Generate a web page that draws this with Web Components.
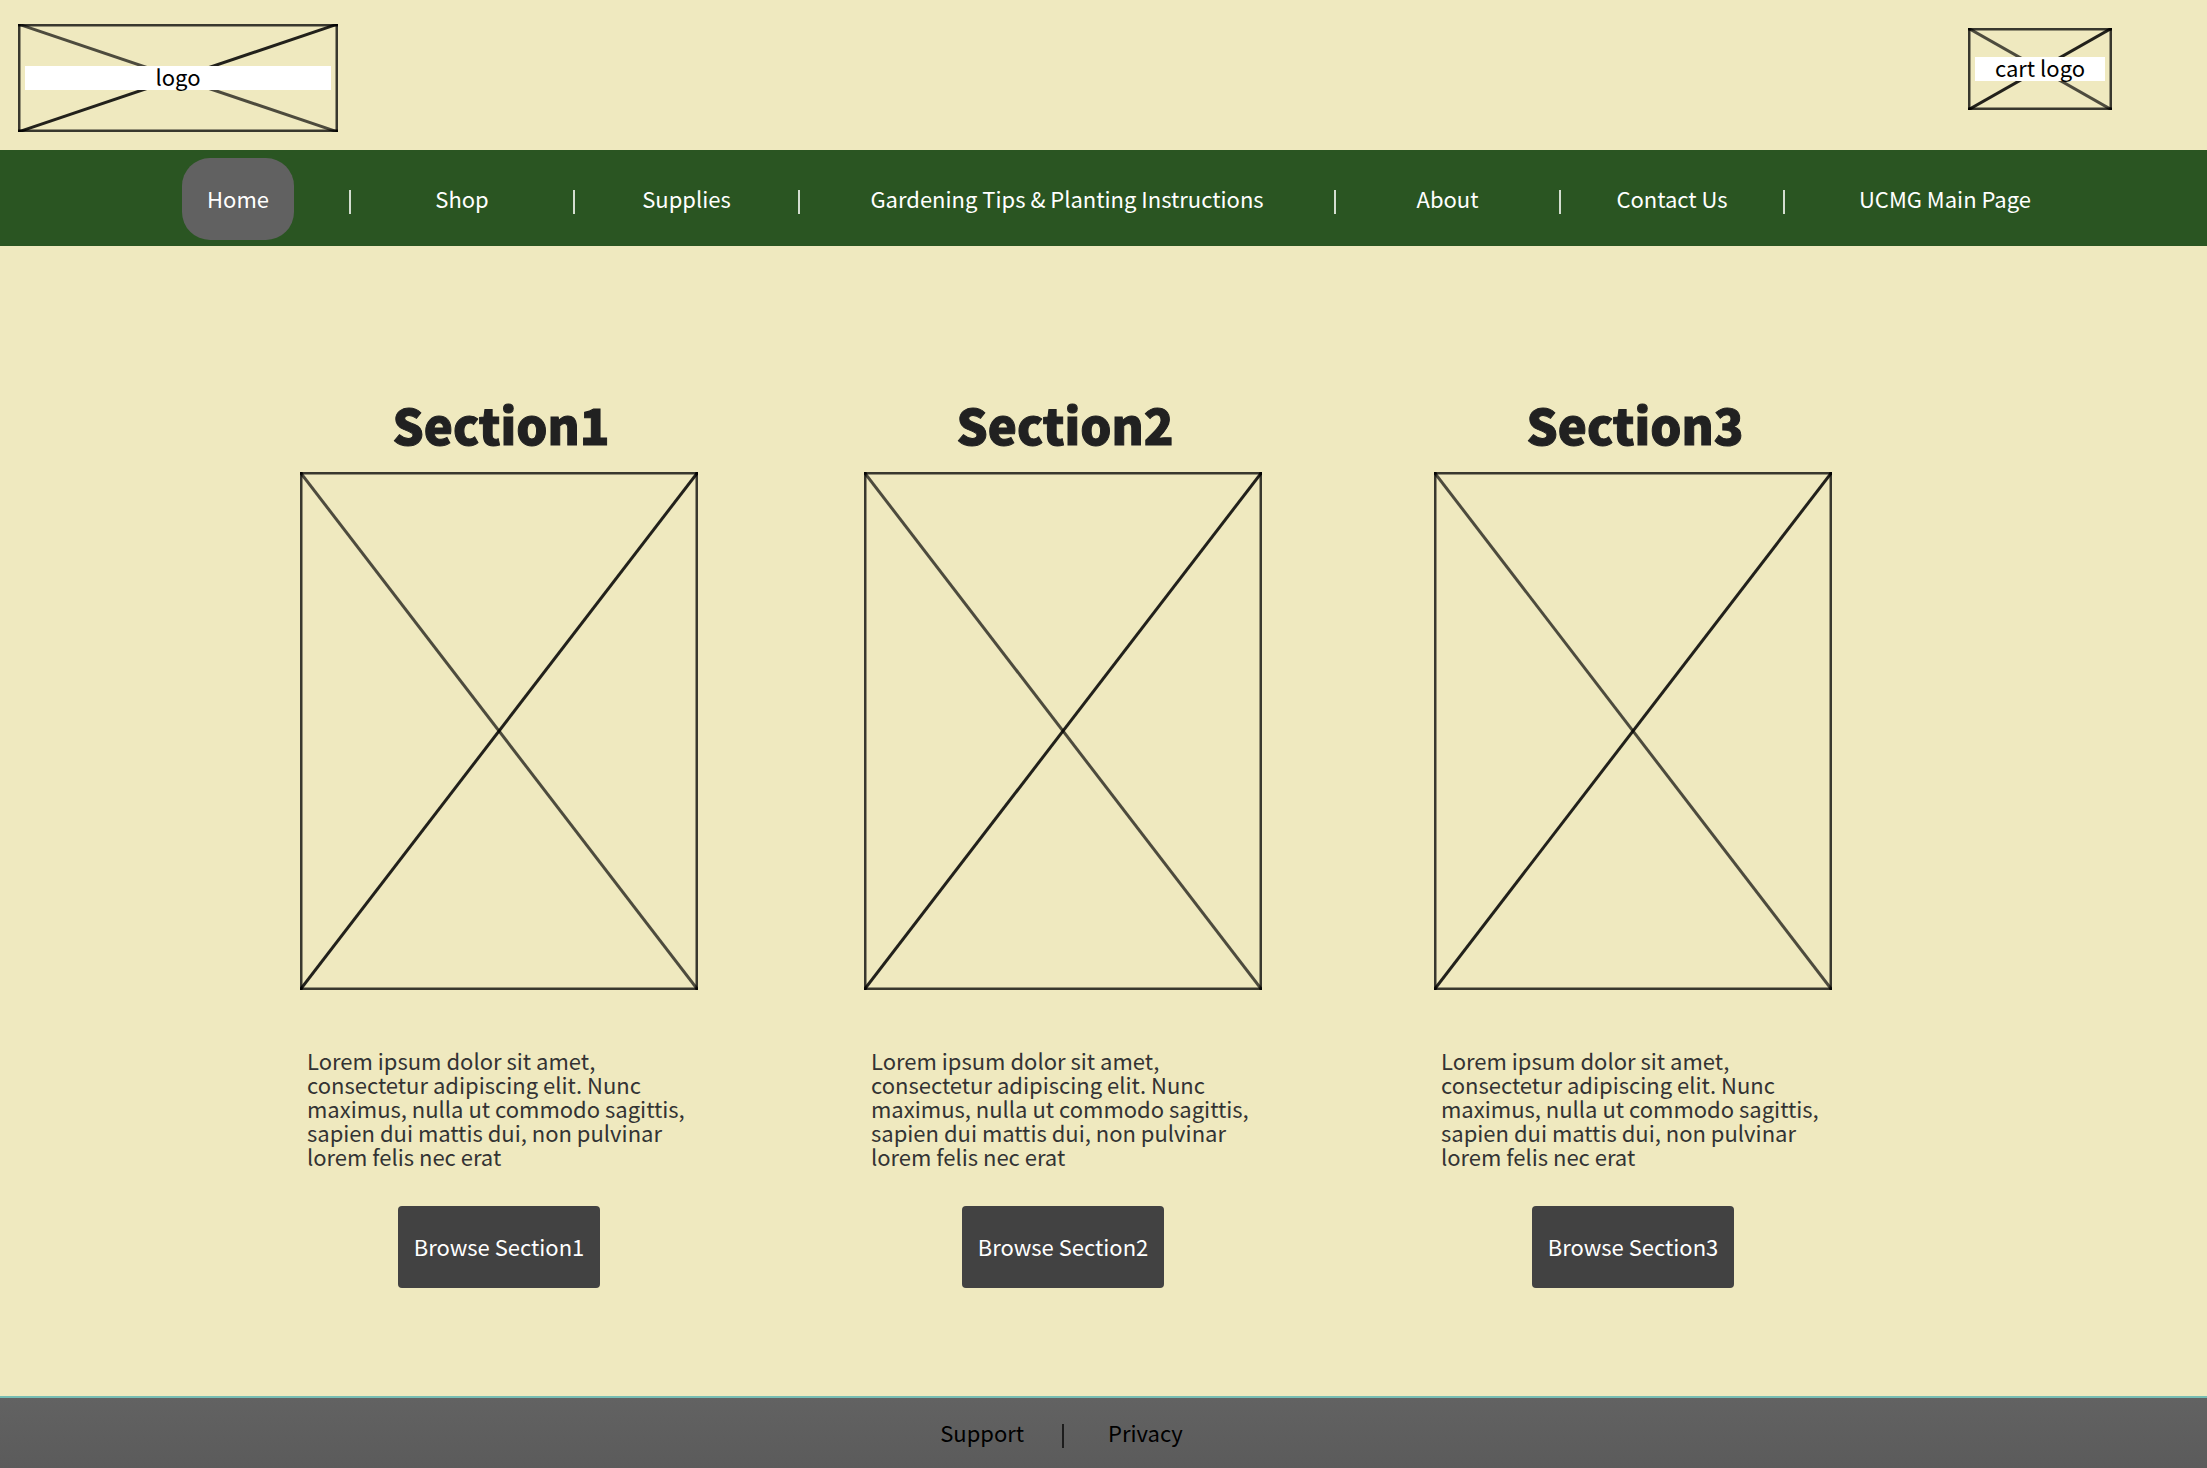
<!DOCTYPE html>
<html lang="en">
<head>
<meta charset="utf-8">
<title>UCMG Garden Shop</title>
<style>
  html, body { margin: 0; }
  body {
    background: #efe9bf;
    color: #000;
    font: 22px/24px "Noto Sans CJK SC", "Noto Sans", sans-serif;
  }
</style>
</head>
<body>
<garden-page></garden-page>
<script>
const define = (name, markup) => {
  const template = document.createElement('template');
  template.innerHTML = markup;
  customElements.define(name, class extends HTMLElement {
    constructor() {
      super();
      this.attachShadow({ mode: 'open' }).append(template.content.cloneNode(true));
    }
  });
};

/* Crossed placeholder box; slotted content becomes its white label. */
define('wire-frame', `
  <style>
    :host { display: grid; align-items: center; }
    svg, .label { grid-area: 1 / 1; }
    svg { display: block; width: 100%; height: 100%; min-height: 0; overflow: hidden; }
    line { stroke: #000; vector-effect: non-scaling-stroke; }
    .edge { stroke-width: 5; stroke-opacity: .76; }
    .down { stroke-width: 3; stroke-opacity: .68; }
    .up { stroke-width: 3; stroke-opacity: .86; }
    .label { margin: 0 7px; text-align: center; }
  </style>
  <svg viewBox="0 0 100 100" preserveAspectRatio="none" aria-hidden="true">
    <line class="down" x1="0" y1="0" x2="100" y2="100"/>
    <line class="up" x1="100" y1="0" x2="0" y2="100"/>
    <line class="edge" x1="0" y1="0" x2="100" y2="0"/>
    <line class="edge" x1="0" y1="100" x2="100" y2="100"/>
    <line class="edge" x1="0" y1="0" x2="0" y2="100"/>
    <line class="edge" x1="100" y1="0" x2="100" y2="100"/>
  </svg>
  <div class="label"><slot></slot></div>`);

define('site-header', `
  <style>
    :host { display: block; }
    header { display: flex; justify-content: space-between; align-items: flex-start; padding: 24px 95px 18px 18px; }
    a { color: #000; text-decoration: none; display: block; }
    .logo wire-frame { width: 320px; height: 108px; }
    .cart { margin-top: 4px; }
    .cart wire-frame { width: 144px; height: 82px; }
    span { display: block; height: 24px; line-height: 20px; background: #fff; }
  </style>
  <header>
    <a class="logo" href="#home"><wire-frame><span>logo</span></wire-frame></a>
    <a class="cart" href="#cart"><wire-frame><span>cart logo</span></wire-frame></a>
  </header>`);

define('site-nav', `
  <style>
    :host { display: block; background: #2a5522; }
    ul {
      display: grid; margin: 0; padding: 8px 0 6px; list-style: none;
      grid-template-columns: 127fr 224fr 224fr 225fr 536fr 225fr 224fr 322fr 100fr;
    }
    li { display: flex; justify-content: center; align-items: center; border-right: 2px solid transparent;
      border-image: linear-gradient(#0000 32px, #d3ddd0 32px, #d3ddd0 56px, #0000 56px) 0 2 0 0; }
    li:first-child { grid-column: 2; }
    li:last-child { border-image: none; }
    a { color: #fff; text-decoration: none; padding: 28px 25px 30px; border-radius: 28px; white-space: nowrap; }
    a[aria-current] { background: #616161; }
  </style>
  <nav><ul>
    <li><a href="#home" aria-current="page">Home</a></li>
    <li><a href="#shop">Shop</a></li>
    <li><a href="#supplies">Supplies</a></li>
    <li><a href="#tips">Gardening Tips &amp; Planting Instructions</a></li>
    <li><a href="#about">About</a></li>
    <li><a href="#contact">Contact Us</a></li>
    <li><a href="#ucmg">UCMG Main Page</a></li>
  </ul></nav>`);

define('section-card', `
  <style>
    :host { display: flex; flex-direction: column; }
    h2 { margin: 0 0 16px; padding-left: 4px; font-size: 49px; line-height: 64px; font-weight: 900;
      color: #212121; -webkit-text-stroke: 1px #212121; text-align: center; }
    wire-frame { height: 518px; }
    p { margin: 58px 0 38px; padding-left: 7px; color: #333; }
    button { align-self: center; width: 202px; height: 82px; padding: 0 0 2px; border: 0; border-radius: 4px;
      background: #424242; color: #fff; font: inherit; }
  </style>
  <h2><slot name="title"></slot></h2>
  <wire-frame></wire-frame>
  <p><slot></slot></p>
  <button type="button"><slot name="action"></slot></button>`);

define('site-footer', `
  <style>
    :host { display: block; border-top: 2px solid #76bdb3; background: linear-gradient(#626262, #5b5b5b); }
    footer { display: flex; align-items: flex-start; padding: 22px 0 20px 42.6%; }
    a { color: #000; text-decoration: none; }
    i { width: 2px; height: 24px; margin: 4px 44px 0 38px; background: #1c1c1c; }
  </style>
  <footer><a href="#support">Support</a><i></i><a href="#privacy">Privacy</a></footer>`);

define('garden-page', `
  <style>
    :host { display: flex; flex-direction: column; min-height: 100vh; }
    main { flex: 1; display: grid; align-content: start; padding-top: 146px;
      grid-template-columns: 300fr 564fr 570fr 398fr 375fr; }
    section-card { width: 398px; }
    section-card:first-child { grid-column: 2; }
  </style>
  <site-header></site-header>
  <site-nav></site-nav>
  <main>
    <section-card><span slot="title">Section1</span>Lorem ipsum dolor sit amet, consectetur adipiscing elit. Nunc maximus, nulla ut commodo sagittis, sapien dui mattis dui, non pulvinar lorem felis nec erat<span slot="action">Browse Section1</span></section-card>
    <section-card><span slot="title">Section2</span>Lorem ipsum dolor sit amet, consectetur adipiscing elit. Nunc maximus, nulla ut commodo sagittis, sapien dui mattis dui, non pulvinar lorem felis nec erat<span slot="action">Browse Section2</span></section-card>
    <section-card><span slot="title">Section3</span>Lorem ipsum dolor sit amet, consectetur adipiscing elit. Nunc maximus, nulla ut commodo sagittis, sapien dui mattis dui, non pulvinar lorem felis nec erat<span slot="action">Browse Section3</span></section-card>
  </main>
  <site-footer></site-footer>`);
</script>
</body>
</html>
